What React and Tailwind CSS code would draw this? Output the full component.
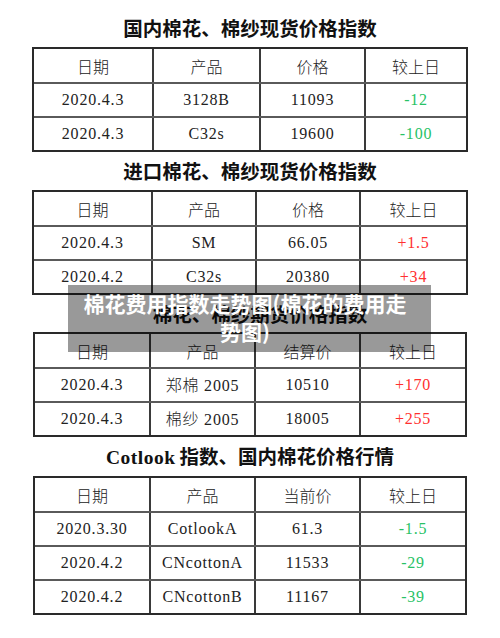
import React from 'react';

const body = { fontFamily: '"Liberation Serif", "Noto Sans CJK SC", serif' };
const cjk = { fontFamily: '"Noto Sans CJK SC", sans-serif' };

const GREEN = 'text-[#27c265]';
const RED = 'text-[#ff3030]';

const tables = [
  {
    title: '国内棉花、棉纱现货价格指数',
    titleClass: 'h-[38px]',
    width: 'w-[436px]',
    cols: 'grid-cols-[118px_107px_105px_1fr]',
    head: ['日期', '产品', '价格', '较上日'],
    rows: [
      ['2020.4.3', '3128B', '11093', '-12', GREEN],
      ['2020.4.3', 'C32s', '19600', '-100', GREEN],
    ],
  },
  {
    title: '进口棉花、棉纱现货价格指数',
    titleClass: 'h-[38px]',
    width: 'w-[436px]',
    cols: 'grid-cols-[117px_104px_104px_1fr]',
    head: ['日期', '产品', '价格', '较上日'],
    rows: [
      ['2020.4.3', 'SM', '66.05', '+1.5', RED],
      ['2020.4.2', 'C32s', '20380', '+34', RED],
    ],
  },
  {
    title: '棉花、棉纱期货价格指数',
    titleClass: 'h-[37px] pl-[20px]',
    width: 'w-[434px]',
    cols: 'grid-cols-[114px_105px_105px_1fr]',
    head: ['日期', '产品', '结算价', '较上日'],
    rows: [
      ['2020.4.3', <span><span style={cjk} className="font-light">郑棉</span> 2005</span>, '10510', '+170', RED],
      ['2020.4.3', <span><span style={cjk} className="font-light">棉纱</span> 2005</span>, '18005', '+255', RED],
    ],
  },
  {
    title: (
      <span>
        <span className="text-[19.5px] tracking-[0.5px]" style={{ fontFamily: '"Liberation Serif", serif' }}>
          Cotlook
        </span>
        <span className="ml-[4px]">指数、国内棉花价格行情</span>
      </span>
    ),
    titleClass: 'h-[39px]',
    width: 'w-[434px]',
    cols: 'grid-cols-[114px_105px_105px_1fr]',
    head: ['日期', '产品', '当前价', '较上日'],
    rows: [
      ['2020.3.30', 'CotlookA', '61.3', '-1.5', GREEN],
      ['2020.4.2', 'CNcottonA', '11533', '-29', GREEN],
      ['2020.4.2', 'CNcottonB', '11167', '-39', GREEN],
    ],
  },
];

const Cell = ({ first, children, className = '' }) => (
  <div
    className={`flex items-center justify-center ${first ? '' : 'border-l-2 border-[#3a3a3a]'} ${className}`}
  >
    {children}
  </div>
);

const PriceTable = ({ t }) => (
  <div className="flex flex-col items-center">
    <div
      className={`flex items-center justify-center text-[19.5px] font-bold text-[#111] ${t.titleClass}`}
      style={cjk}
    >
      {t.title}
    </div>
    <div className={`border-2 border-[#2a2a2a] ${t.width}`}>
      <div className={`grid h-[33px] ${t.cols} text-[16px] font-light text-[#222]`} style={cjk}>
        {t.head.map((h, i) => (
          <Cell key={i} first={i === 0}>
            {h}
          </Cell>
        ))}
      </div>
      {t.rows.map((r, ri) => (
        <div
          key={ri}
          className={`grid h-[34px] ${t.cols} border-t-2 border-[#5a5a5a] text-[16px] tracking-[0.8px] text-[#222]`}
          style={body}
        >
          <Cell first>{r[0]}</Cell>
          <Cell>{r[1]}</Cell>
          <Cell>{r[2]}</Cell>
          <Cell className={r[4]}>{r[3]}</Cell>
        </div>
      ))}
    </div>
  </div>
);

export default function App() {
  return (
    <div className="relative w-[500px] h-[638px] bg-white pt-[9px] overflow-hidden">
      {tables.map((t, i) => (
        <PriceTable key={i} t={t} />
      ))}

      <div className="absolute left-[68px] top-[285px] w-[363px] h-[67px] bg-black/40 pt-[4px] pl-[10px] pr-[19px]">
        <p className="text-center text-[21px] leading-[28px] font-bold text-white" style={cjk}>
          棉花费用指数走势图(棉花的费用走势图)
        </p>
      </div>
    </div>
  );
}
